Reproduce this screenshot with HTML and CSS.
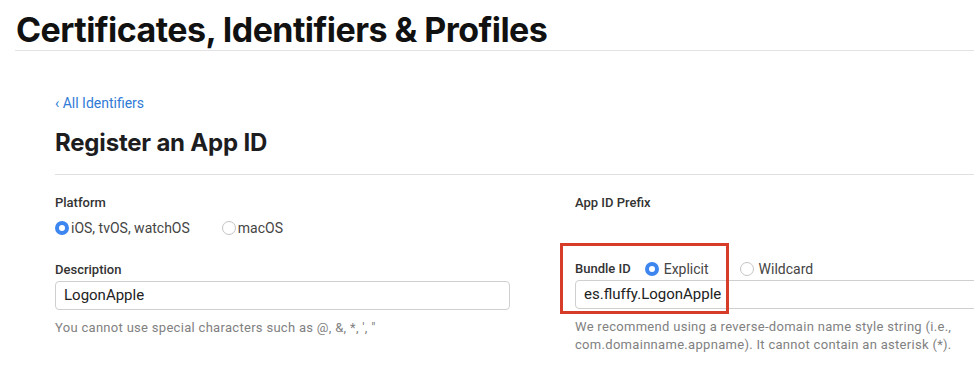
FILE: index.html
```html
<!DOCTYPE html>
<html lang="en">

<head>
    <meta charset="UTF-8">
    <meta name="viewport" content="width=device-width, initial-scale=1.0">
    <title>Register an App ID</title>
    <link rel="stylesheet" href="styles.css">
</head>

<body>
    <header class="top">
        <h1 class="top-title">Certificates, Identifiers &amp; Profiles</h1>
    </header>

    <main class="main">
        <a class="back-link" href="#">&lsaquo; All Identifiers</a>
        <h2 class="page-title">Register an App ID</h2>

        <div class="form-grid">
            <div class="field">
                <div class="field-label">Platform</div>
                <div class="radios">
                    <label class="radio checked"><span class="dot"></span>iOS, tvOS, watchOS</label>
                    <label class="radio"><span class="dot"></span>macOS</label>
                </div>
            </div>
            <div class="field">
                <div class="field-label">App ID Prefix</div>
            </div>

            <div class="field">
                <div class="field-label">Description</div>
                <div class="input">LogonApple</div>
                <p class="help">You cannot use special characters such as @, &amp;, *, ', "</p>
            </div>
            <div class="field bundle">
                <div class="label-row">
                    <span class="field-label inline">Bundle ID</span>
                    <label class="radio checked"><span class="dot"></span>Explicit</label>
                    <label class="radio"><span class="dot"></span>Wildcard</label>
                </div>
                <div class="input input-large">es.fluffy.LogonApple</div>
                <p class="help">We recommend using a reverse-domain name style string (i.e.,<br>com.domainname.appname). It cannot contain an asterisk (*).</p>
                <span class="highlight"></span>
            </div>
        </div>
    </main>
</body>

</html>
```

FILE: styles.css
```css
html,
body {
    margin: 0;
    background: #fff;
    overflow: hidden;
}

body {
    font-family: Roboto, "Liberation Sans", sans-serif;
    color: #1d1d1f;
}

.top {
    margin-left: 15px;
    border-bottom: 1px solid #e3e3e3;
}

.top-title {
    margin: 0;
    padding: 8px 0 0 1px;
    height: 42px;
    font-family: Inter, "Liberation Sans", sans-serif;
    font-size: 34px;
    line-height: 44px;
    font-weight: 700;
    letter-spacing: -0.55px;
    color: #111;
}

.main {
    padding: 43px 0 0 55px;
}

.back-link {
    display: block;
    font-size: 14px;
    line-height: 18px;
    color: #2f7bd6;
    text-decoration: none;
}

.page-title {
    margin: 16px 0 0;
    padding-bottom: 16px;
    font-family: Inter, "Liberation Sans", sans-serif;
    font-size: 24px;
    line-height: 30px;
    font-weight: 700;
    letter-spacing: -0.2px;
    color: #1d1d1f;
    border-bottom: 1px solid #e0e0e0;
}

.form-grid {
    display: grid;
    grid-template-columns: 455px 455px;
    column-gap: 65px;
    row-gap: 24px;
    padding-top: 19px;
}

.field {
    position: relative;
}

.field-label {
    font-size: 13px;
    line-height: 18px;
    font-weight: 500;
    color: #333;
    margin-bottom: 2px;
}

.field-label.inline {
    margin: 0 14px 0 0;
}

.radios {
    display: flex;
    align-items: center;
    margin-top: 7px;
}

.label-row {
    display: flex;
    align-items: center;
    height: 16px;
    margin-bottom: 3px;
}

.radio {
    display: flex;
    align-items: center;
    font-size: 14px;
    line-height: 18px;
    color: #444;
    margin-right: 32px;
}

.dot {
    box-sizing: border-box;
    width: 14px;
    height: 14px;
    margin-right: 2px;
    border-radius: 50%;
    border: 1px solid #c4c4c4;
    background: #fff;
}

.radio.checked .dot {
    border: 4px solid #3d86f0;
    background: #fff;
}

.label-row .dot {
    margin-right: 5px;
}

.label-row .radio {
    margin-right: 31px;
}

.input {
    box-sizing: border-box;
    height: 29px;
    padding: 0 8px;
    border: 1px solid #cfcfcf;
    border-radius: 4px;
    font-size: 15px;
    line-height: 27px;
    color: #222;
}

.help {
    margin: 9px 0 0;
    font-size: 13px;
    line-height: 18px;
    letter-spacing: 0.3px;
    color: #818181;
}

.highlight {
    position: absolute;
    box-sizing: border-box;
    left: -15px;
    top: -18px;
    width: 169px;
    height: 71px;
    border: 3px solid #d63c28;
}
```
